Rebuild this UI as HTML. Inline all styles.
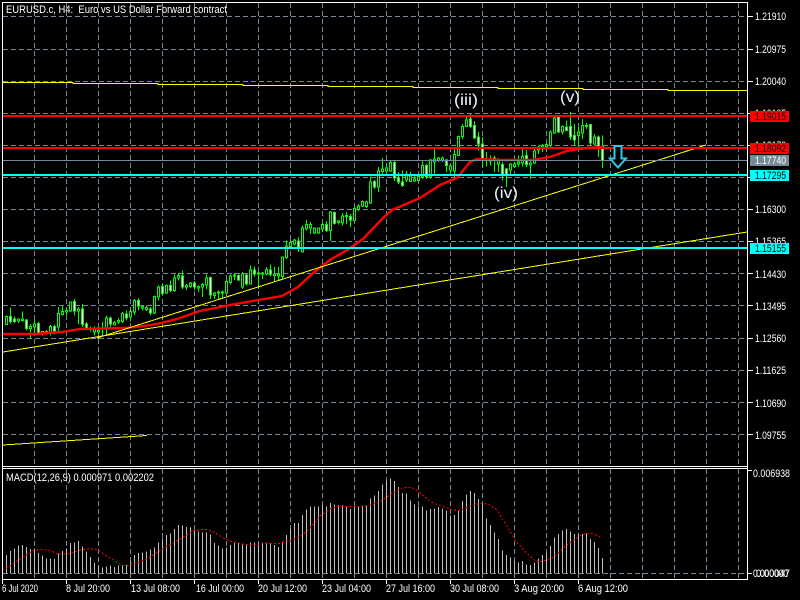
<!DOCTYPE html>
<html><head><meta charset="utf-8"><style>
html,body{margin:0;padding:0;background:#000;width:800px;height:600px;overflow:hidden}
svg{display:block}
text{font-family:"Liberation Sans",sans-serif;font-size:11px;fill:#fff;white-space:pre}
</style></head><body>
<svg width="800" height="600" viewBox="0 0 800 600" xmlns="http://www.w3.org/2000/svg">
<rect width="800" height="600" fill="#000"/>
<!-- grid -->
<g shape-rendering="crispEdges" stroke="#778899" stroke-width="1" fill="none" stroke-dasharray="5 3">
<path d="M3 16.5H747M3 49.5H747M3 81.5H747M3 113.5H747M3 145.5H747M3 177.5H747M3 209.5H747M3 241.5H747M3 273.5H747M3 305.5H747M3 338.5H747M3 370.5H747M3 402.5H747M3 434.5H747M3 573.5H747"/>
<path d="M34.5 3V466M66.5 3V466M98.5 3V466M130.5 3V466M162.5 3V466M194.5 3V466M226.5 3V466M258.5 3V466M290.5 3V466M322.5 3V466M354.5 3V466M386.5 3V466M418.5 3V466M450.5 3V466M482.5 3V466M514.5 3V466M546.5 3V466M578.5 3V466M610.5 3V466M642.5 3V466M674.5 3V466M706.5 3V466M738.5 3V466"/>
<path d="M34.5 469V579M66.5 469V579M98.5 469V579M130.5 469V579M162.5 469V579M194.5 469V579M226.5 469V579M258.5 469V579M290.5 469V579M322.5 469V579M354.5 469V579M386.5 469V579M418.5 469V579M450.5 469V579M482.5 469V579M514.5 469V579M546.5 469V579M578.5 469V579M610.5 469V579M642.5 469V579M674.5 469V579M706.5 469V579M738.5 469V579"/>
</g>
<!-- candles group 1 -->
<g shape-rendering="crispEdges" transform="translate(.5,260.5) scale(.33333)" stroke="#0f0" stroke-width="3.05">
<path fill="none" d="M18 165V192M30 141V190M42 168V187M54 175V187M66 153V183M78 175V210M90 190V234M102 178V222M114 185V222M126 212V225M138 208V222M150 193V225M162 192V222M174 140V215M186 135V165M198 143V165M210 123V155M222 115V165M234 140V190M246 130V200M258 185V210M270 198V213M282 198V225M294 198V235M306 185V225M318 165V222M330 168V200M342 182V195M354 172V190M366 155V187M378 150V180M390 145V183M402 115V163M414 112V150M426 135V150M438 135V152M450 140V165M462 105V160M474 75V120M486 70V105M498 72V100M510 60V95M522 42V95M534 38V60M546 30V85M558 70V88M570 65V82M582 62V88M594 75V95"/>
<path fill="#000" d="M15 168h6V192h-6zM51 176h6V181h-6zM63 175h6V180h-6zM87 198h6V204h-6zM99 190h6V200h-6zM123 213h6V218h-6zM135 213h6V218h-6zM147 198h6V215h-6zM171 159h6V200h-6zM183 153h6V162h-6zM195 150h6V155h-6zM207 125h6V152h-6zM231 145h6V152h-6zM267 202h6V205h-6zM279 205h6V215h-6zM291 210h6V215h-6zM315 172h6V205h-6zM339 186h6V193h-6zM351 180h6V185h-6zM363 159h6V183h-6zM387 153h6V170h-6zM399 120h6V155h-6zM423 138h6V143h-6zM435 141h6V147h-6zM459 108h6V158h-6zM471 80h6V110h-6zM495 75h6V98h-6zM519 52h6V90h-6zM531 45h6V53h-6zM555 75h6V80h-6zM567 68h6V78h-6zM591 78h6V82h-6z"/>
<path fill="#fff" d="M27 168h6V183h-6zM39 175h6V183h-6zM75 178h6V204h-6zM111 189h6V218h-6zM159 198h6V213h-6zM219 123h6V152h-6zM243 145h6V192h-6zM255 190h6V205h-6zM327 172h6V190h-6zM375 160h6V172h-6zM411 120h6V137h-6zM447 145h6V158h-6zM483 78h6V99h-6zM507 75h6V90h-6zM543 46h6V80h-6zM579 68h6V80h-6z"/>
</g>
<!-- candles group 2 -->
<g shape-rendering="crispEdges" transform="translate(200.5,150.5) scale(.33333)" stroke="#0f0" stroke-width="3.05">
<path fill="none" d="M6 397V440M18 372V415M30 378V445M42 425V445M54 420V445M66 420V442M78 385V430M90 372V402M102 368V388M114 372V392M126 365V415M138 370V405M150 345V402M162 348V378M174 365V415M186 365V385M198 350V375M210 342V378M222 350V393M234 350V388M246 320V385M258 270V325M270 268V295M282 265V285M294 260V305M306 225V305M318 208V240M330 215V250M342 232V250M354 232V250M366 215V245M378 212V245M390 182V272M402 183V222M414 208V222M426 187V225M438 185V220M450 190V230M462 165V212M474 160V182M486 150V170M498 150V172M510 78V160M522 88V115M534 50V125M546 22V75M558 40V70M570 32V65M582 30V92M594 65V100"/>
<path fill="#000" d="M3 402h6V410h-6zM15 382h6V403h-6zM39 428h6V435h-6zM51 424h6V428h-6zM63 425h6V428h-6zM75 393h6V427h-6zM87 376h6V396h-6zM99 373h6V376h-6zM123 370h6V410h-6zM147 358h6V400h-6zM171 367h6V370h-6zM183 367h6V370h-6zM195 357h6V370h-6zM219 370h6V375h-6zM231 370h6V376h-6zM243 320h6V378h-6zM255 287h6V321h-6zM267 276h6V288h-6zM279 269h6V280h-6zM303 232h6V305h-6zM315 222h6V235h-6zM327 222h6V233h-6zM339 232h6V248h-6zM351 232h6V248h-6zM363 222h6V235h-6zM387 185h6V240h-6zM411 212h6V216h-6zM423 196h6V217h-6zM435 195h6V198h-6zM459 174h6V210h-6zM471 166h6V177h-6zM483 153h6V167h-6zM495 155h6V168h-6zM507 94h6V158h-6zM531 62h6V110h-6zM543 55h6V63h-6zM555 53h6V62h-6zM567 36h6V62h-6z"/>
<path fill="#fff" d="M27 381h6V433h-6zM111 375h6V389h-6zM135 374h6V400h-6zM159 358h6V370h-6zM207 358h6V372h-6zM291 272h6V290h-6zM375 222h6V240h-6zM399 186h6V219h-6zM447 198h6V208h-6zM519 93h6V110h-6zM579 36h6V82h-6zM591 82h6V95h-6z"/>
</g>
<!-- candles group 3 -->
<g shape-rendering="crispEdges" transform="translate(360.5,80.5) scale(.33333)" stroke="#0f0" stroke-width="3.05">
<path fill="none" d="M126 270V320M138 272V305M150 275V305M162 285V305M174 285V302M186 242V295M198 250V295M210 235V295M222 205V285M234 230V245M246 228V245M258 235V275M270 250V285M282 205V290M294 165V225M306 130V175M318 105V140M330 100V142M342 122V175M354 155V210M366 170V260M378 215V258M390 225V255M402 225V275M414 232V275M426 245V300M438 262V320M450 248V280M462 245V262M474 225V258M486 205V258M498 208V260M510 240V295M522 205V250M534 195V220M546 190V215M558 188V210M570 150V200M582 108V160M594 108V158M606 135V162M618 120V150M630 95V178M642 130V195M654 140V200M666 115V175M678 128V145M690 130V195M702 160V195M714 165V230M726 165V262"/>
<path fill="#000" d="M135 280h6V298h-6zM147 287h6V303h-6zM159 295h6V302h-6zM171 288h6V300h-6zM183 255h6V290h-6zM207 238h6V290h-6zM219 235h6V245h-6zM231 232h6V240h-6zM243 232h6V240h-6zM267 256h6V268h-6zM279 222h6V272h-6zM291 168h6V225h-6zM303 138h6V168h-6zM315 118h6V138h-6zM375 235h6V240h-6zM387 235h6V242h-6zM399 232h6V240h-6zM411 238h6V250h-6zM447 250h6V268h-6zM459 250h6V258h-6zM471 245h6V250h-6zM483 228h6V248h-6zM507 248h6V254h-6zM519 212h6V248h-6zM531 200h6V208h-6zM543 195h6V200h-6zM555 192h6V198h-6zM567 155h6V195h-6zM579 112h6V158h-6zM603 138h6V155h-6zM651 155h6V165h-6zM663 135h6V158h-6zM675 135h6V138h-6zM699 170h6V190h-6z"/>
<path fill="#fff" d="M123 305h6V315h-6zM195 255h6V290h-6zM255 238h6V255h-6zM327 116h6V138h-6zM339 135h6V172h-6zM351 170h6V190h-6zM363 190h6V240h-6zM423 252h6V285h-6zM435 265h6V285h-6zM495 225h6V252h-6zM591 110h6V155h-6zM615 140h6V150h-6zM627 138h6V170h-6zM639 165h6V178h-6zM687 132h6V188h-6zM711 170h6V198h-6zM723 198h6V240h-6z"/>
</g>
<!-- red MA -->
<polyline fill="none" stroke="#f00" stroke-width="2.4" stroke-linejoin="round" points="3,334 35,334 62,332 80,329 123,328 137,327 157,324 177,319 200,311 230,305 258,300 282,296 298,287 313,273 330,260 347,250 363,239 383,218 392,210 420,198 440,185 457,178 470,162 477,159 500,160 533,160 550,157 567,151 587,148 603,147"/>
<!-- yellow stepped MA -->
<g shape-rendering="crispEdges" fill="none" stroke="#ff0" stroke-width="1">
<path d="M3 82.5H73V83.5H158V84.5H243V85.5H328V86.5H413V87.5H498V88.5H583V89.5H668V90.5H747"/>
<polyline points="3,445 147,435.5"/>
</g>
<!-- trendlines -->
<g fill="none" stroke="#ff0" stroke-width="1" shape-rendering="crispEdges">
<line x1="97" y1="338" x2="706" y2="145"/>
<line x1="3" y1="352" x2="747" y2="232"/>
</g>
<!-- horizontal objects -->
<g shape-rendering="crispEdges">
<rect x="3" y="115" width="744" height="2" fill="#f00"/>
<rect x="3" y="147" width="744" height="2" fill="#f00"/>
<rect x="3" y="160" width="744" height="1" fill="#778899"/>
<rect x="3" y="174" width="744" height="2" fill="#0ff"/>
<rect x="3" y="247" width="744" height="2" fill="#0ff"/>
</g>
<!-- arrow -->
<path d="M614.5 146H621.5V158.5H626L618 167.5L610 158.5H614.5Z" fill="#000" stroke="#2fc8e8" stroke-width="2"/>
<!-- macd bars -->
<g shape-rendering="crispEdges" fill="none" stroke="#c0c0c0" stroke-width="3.05">
<path transform="translate(.5,460) scale(.33333)" d="M18 285V340M30 273V340M42 265V340M54 257V340M66 255V340M78 261V340M90 267V340M102 265V340M114 279V340M126 287V340M138 295V340M150 295V340M162 297V340M174 281V340M186 273V340M198 265V340M210 249V340M222 247V340M234 243V340M246 259V340M258 275V340M270 291V340M282 307V340M294 317V340M306 323V340M318 319V340M330 317V340M342 321V340M354 317V340M366 315V340M378 313V340M390 303V340M402 285V340M414 279V340M426 277V340M438 275V340M450 269V340M462 263V340M474 247V340M486 235V340M498 225V340M510 221V340M522 207V340M534 195V340M546 197V340M558 201V340M570 203V340M582 211V340M594 215V340M606 217V340M618 217V340M630 223V340M642 249V340M654 257V340M666 265V340M678 263V340M690 255V340M702 249V340M714 251V340M726 253V340M738 255V340M750 247V340M762 247V340M774 247V340M786 247V340M798 247V340"/>
<path transform="translate(270.5,460) scale(.33333)" d="M0 251V340M12 255V340M24 261V340M36 245V340M48 225V340M60 207V340M72 189V340M84 189V340M96 165V340M108 149V340M120 139V340M132 139V340M144 139V340M156 135V340M168 139V340M180 129V340M192 133V340M204 135V340M216 135V340M228 139V340M240 147V340M252 141V340M264 139V340M276 137V340M288 135V340M300 115V340M312 107V340M324 93V340M336 73V340M348 63V340M360 55V340M372 63V340M384 81V340M396 99V340M408 101V340M420 121V340M432 133V340M444 139V340M456 139V340M468 151V340M480 147V340M492 145V340M504 141V340M516 145V340M528 151V340M540 167V340M552 165V340M564 151V340M576 123V340M588 103V340M600 93V340M612 99V340M624 117V340M636 129V340M648 175V340M660 195V340M672 217V340M684 237V340M696 271V340M708 285V340M720 293V340M732 301V340M744 307V340M756 303V340M768 313V340M780 315V340M792 307V340M804 295V340"/>
<path transform="translate(540.5,460) scale(.33333)" d="M6 285V340M18 279V340M30 258V340M42 232V340M54 222V340M66 212V340M78 207V340M90 215V340M102 222V340M114 222V340M126 222V340M138 220V340M150 237V340M162 246V340M174 264V340M186 294V340"/>
</g>
<!-- signal -->
<g fill="none" stroke="#f00" stroke-width="3.05" stroke-dasharray="6 6" shape-rendering="crispEdges">
<polyline transform="translate(0,460) scale(.33333)" points="7,330 31,318 55,300 79,285 103,270 127,268 151,272 175,283 205,281 235,272 265,266 295,270 320,288 345,303 367,316 391,316 420,305 445,295 475,275 500,258 530,243 555,228 585,210 620,208 645,218 675,237 700,246 740,254 765,256 790,248 810,250"/>
<polyline transform="translate(270,460) scale(.33333)" points="0,250 30,250 60,242 90,230 120,205 150,168 180,147 210,138 260,140 300,136 330,125 370,98 400,82 425,82 450,98 480,125 510,137 545,148 570,152 600,138 630,130 655,132 680,150 710,197 735,240 770,280 795,302 810,306"/>
<polyline transform="translate(540,460) scale(.33333)" points="0,305 20,300 40,292 65,268 90,248 120,228 140,220 160,221 180,232"/>
</g>
<!-- frame -->
<g shape-rendering="crispEdges" fill="#fff">
<rect x="2" y="2" width="746" height="1"/>
<rect x="2" y="2" width="1" height="578"/>
<rect x="747" y="2" width="1" height="578"/>
<rect x="2" y="466" width="746" height="1"/>
<rect x="2" y="468" width="746" height="1"/>
<rect x="2" y="579" width="746" height="1"/>
<!-- y ticks -->
<path d="M748 16h5v1h-5zM748 49h5v1h-5zM748 81h5v1h-5zM748 113h5v1h-5zM748 145h5v1h-5zM748 177h5v1h-5zM748 209h5v1h-5zM748 241h5v1h-5zM748 273h5v1h-5zM748 305h5v1h-5zM748 338h5v1h-5zM748 370h5v1h-5zM748 402h5v1h-5zM748 434h5v1h-5zM748 470h4v1h-4zM748 573h4v1h-4z"/>
<!-- x ticks -->
<path d="M2 580h1v4h-1zM66 580h1v4h-1zM130 580h1v4h-1zM194 580h1v4h-1zM258 580h1v4h-1zM322 580h1v4h-1zM386 580h1v4h-1zM450 580h1v4h-1zM514 580h1v4h-1zM578 580h1v4h-1z"/>
</g>
<!-- text -->
<text x="6" y="13" textLength="221" lengthAdjust="spacingAndGlyphs" xml:space="preserve">EURUSD.c, H4:  Euro vs US Dollar Forward contract</text>
<text x="6" y="481" textLength="148" lengthAdjust="spacingAndGlyphs">MACD(12,26,9) 0.000971 0.002202</text>
<text x="755" y="20" textLength="31" lengthAdjust="spacingAndGlyphs">1.21910</text>
<text x="755" y="53" textLength="31" lengthAdjust="spacingAndGlyphs">1.20975</text>
<text x="755" y="85" textLength="31" lengthAdjust="spacingAndGlyphs">1.20040</text>
<text x="755" y="117" textLength="31" lengthAdjust="spacingAndGlyphs">1.19105</text>
<text x="755" y="149" textLength="31" lengthAdjust="spacingAndGlyphs">1.18170</text>
<text x="755" y="181" textLength="31" lengthAdjust="spacingAndGlyphs">1.17235</text>
<text x="755" y="213" textLength="31" lengthAdjust="spacingAndGlyphs">1.16300</text>
<text x="755" y="245" textLength="31" lengthAdjust="spacingAndGlyphs">1.15365</text>
<text x="755" y="278" textLength="31" lengthAdjust="spacingAndGlyphs">1.14430</text>
<text x="755" y="310" textLength="31" lengthAdjust="spacingAndGlyphs">1.13495</text>
<text x="755" y="342" textLength="31" lengthAdjust="spacingAndGlyphs">1.12560</text>
<text x="755" y="374" textLength="31" lengthAdjust="spacingAndGlyphs">1.11625</text>
<text x="755" y="407" textLength="31" lengthAdjust="spacingAndGlyphs">1.10690</text>
<text x="755" y="439" textLength="31" lengthAdjust="spacingAndGlyphs">1.09755</text>
<text x="753" y="477" textLength="37" lengthAdjust="spacingAndGlyphs">0.006938</text>
<text x="753" y="577" textLength="35" lengthAdjust="spacingAndGlyphs">0.000000</text>
<text x="756" y="577" textLength="34" lengthAdjust="spacingAndGlyphs">0.00047</text>
<!-- price boxes -->
<g shape-rendering="crispEdges">
<rect x="750" y="111" width="39" height="11" fill="#f00"/>
<rect x="750" y="143" width="39" height="11" fill="#f00"/>
<rect x="750" y="155" width="39" height="11" fill="#778899"/>
<rect x="750" y="170" width="39" height="11" fill="#0ff"/>
<rect x="750" y="243" width="39" height="11" fill="#0ff"/>
</g>
<text x="755" y="120" textLength="31" lengthAdjust="spacingAndGlyphs" style="fill:#000">1.19015</text>
<text x="755" y="152" textLength="31" lengthAdjust="spacingAndGlyphs" style="fill:#000">1.18092</text>
<text x="755" y="164" textLength="31" lengthAdjust="spacingAndGlyphs" style="fill:#fff">1.17740</text>
<text x="755" y="179" textLength="31" lengthAdjust="spacingAndGlyphs" style="fill:#000">1.17295</text>
<text x="755" y="252" textLength="31" lengthAdjust="spacingAndGlyphs" style="fill:#000">1.15155</text>
<!-- time axis -->
<text x="2" y="592" textLength="36" lengthAdjust="spacingAndGlyphs">6 Jul 2020</text>
<text x="66" y="592" textLength="44" lengthAdjust="spacingAndGlyphs">8 Jul 20:00</text>
<text x="131" y="592" textLength="49" lengthAdjust="spacingAndGlyphs">13 Jul 08:00</text>
<text x="196" y="592" textLength="48" lengthAdjust="spacingAndGlyphs">16 Jul 00:00</text>
<text x="258" y="592" textLength="49" lengthAdjust="spacingAndGlyphs">20 Jul 12:00</text>
<text x="322" y="592" textLength="49" lengthAdjust="spacingAndGlyphs">23 Jul 04:00</text>
<text x="386" y="592" textLength="49" lengthAdjust="spacingAndGlyphs">27 Jul 16:00</text>
<text x="450" y="592" textLength="49" lengthAdjust="spacingAndGlyphs">30 Jul 08:00</text>
<text x="514" y="592" textLength="50" lengthAdjust="spacingAndGlyphs">3 Aug 20:00</text>
<text x="578" y="592" textLength="50" lengthAdjust="spacingAndGlyphs">6 Aug 12:00</text>
<!-- wave labels -->
<text x="454" y="105" textLength="24" lengthAdjust="spacingAndGlyphs" style="font-size:16px;fill:#eaf6ff">(iii)</text>
<text x="560" y="102" textLength="20" lengthAdjust="spacingAndGlyphs" style="font-size:16px;fill:#eaf6ff">(v)</text>
<text x="494" y="198" textLength="24" lengthAdjust="spacingAndGlyphs" style="font-size:16px;fill:#eaf6ff">(iv)</text>
</svg>
</body></html>
